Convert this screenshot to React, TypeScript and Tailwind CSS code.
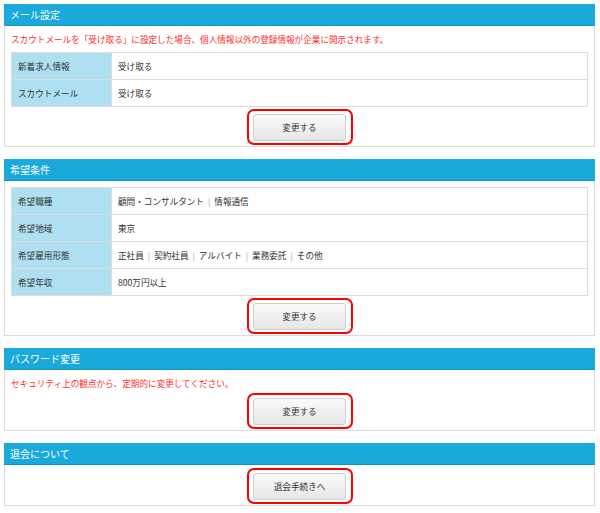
import React from "react";

const font = { fontFamily: '"Noto Sans CJK JP", "Noto Sans", sans-serif' };

function Sep() {
  return <span className="text-[#aaa] mx-[4px]">|</span>;
}

function Header({ title }: { title: string }) {
  return (
    <div className="h-[22px] bg-[#19a9da] text-white text-[10px] pl-[6px] flex items-center border-b border-[#1596c2]">
      {title}
    </div>
  );
}

function Btn({ label }: { label: string }) {
  return (
    <div className="flex justify-center pt-[7px]">
      <div className="relative">
        <div className="w-[93px] h-[27px] rounded-[3px] border border-[#cfcfcf] bg-gradient-to-b from-[#fbfbfb] to-[#e6e6e6] flex items-center justify-center text-[8.6px] text-[#333]">
          {label}
        </div>
        <div className="absolute -left-[6px] -right-[7px] -top-[5px] -bottom-[4px] border-[2.5px] border-[#ff0000] rounded-[7px] pointer-events-none" />
      </div>
    </div>
  );
}

function Table({ rows }: { rows: [string, React.ReactNode][] }) {
  return (
    <table className="w-full border-collapse text-[8.6px] text-[#333]">
      <tbody>
        {rows.map(([k, v], i) => (
          <tr key={i} className="h-[27px]">
            <td className="w-[100px] bg-[#aee0f1] border border-[#dcdcdc] pl-[6px]">{k}</td>
            <td className="bg-white border border-[#dcdcdc] pl-[6px]">{v}</td>
          </tr>
        ))}
      </tbody>
    </table>
  );
}

export default function App() {
  return (
    <div className="w-[600px] h-[513px] bg-white pl-[4px] pt-[4px]" style={font}>
      <div className="w-[591px] flex flex-col gap-[12px]">
        <section>
          <Header title="メール設定" />
          <div className="border border-t-0 border-[#dcdcdc] px-[6px] pt-[6px] pb-[5px]">
            <p className="text-[8.6px] text-[#ff2b2b] leading-[15px] mb-[5px]">
              スカウトメールを「受け取る」に設定した場合、個人情報以外の登録情報が企業に開示されます。
            </p>
            <Table
              rows={[
                ["新着求人情報", "受け取る"],
                ["スカウトメール", "受け取る"],
              ]}
            />
            <Btn label="変更する" />
          </div>
        </section>
        <section>
          <Header title="希望条件" />
          <div className="border border-t-0 border-[#dcdcdc] px-[6px] pt-[6px] pb-[5px]">
            <Table
              rows={[
                [
                  "希望職種",
                  <>
                    顧問・コンサルタント<Sep />情報通信
                  </>,
                ],
                ["希望地域", "東京"],
                [
                  "希望雇用形態",
                  <>
                    正社員<Sep />契約社員<Sep />アルバイト<Sep />業務委託<Sep />その他
                  </>,
                ],
                ["希望年収", "800万円以上"],
              ]}
            />
            <Btn label="変更する" />
          </div>
        </section>
        <section>
          <Header title="パスワード変更" />
          <div className="border border-t-0 border-[#dcdcdc] px-[6px] pt-[6px] pb-[5px]">
            <p className="text-[8.6px] text-[#ff2b2b] leading-[15px]">
              セキュリティ上の観点から、定期的に変更してください。
            </p>
            <Btn label="変更する" />
          </div>
        </section>
        <section>
          <Header title="退会について" />
          <div className="border border-t-0 border-[#dcdcdc] px-[6px] pt-[1px] pb-[5px]">
            <Btn label="退会手続きへ" />
          </div>
        </section>
      </div>
    </div>
  );
}
